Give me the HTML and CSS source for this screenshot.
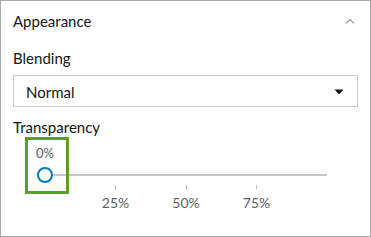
FILE: index.html
```html
<!DOCTYPE html>
<html>
<head>
<meta charset="utf-8">
<link rel="stylesheet" href="styles.css">
</head>
<body>
<div class="panel">
  <div class="header">
    <span class="title">Appearance</span>
    <svg class="chev" width="10" height="6" viewBox="0 0 10 6"><path d="M1 5.5 L5 1.5 L9 5.5" fill="none" stroke="#9a9a9a" stroke-width="1.2"/></svg>
  </div>
  <div class="content">
    <div class="label label-first">Blending</div>
    <div class="select">
      <span>Normal</span>
      <svg width="10" height="6" viewBox="0 0 10 6"><path d="M0.5 0.5 H9.5 L5 5.5 Z" fill="#151515"/></svg>
    </div>
    <div class="label label-second">Transparency</div>
    <div class="slider">
      <div class="track-row">
        <div class="track"></div>
        <div class="handle"></div>
        <div class="value">0%</div>
      </div>
      <div class="scale">
        <div class="mark"></div>
        <div class="mark"><span class="tick"></span><span class="tick-label">25%</span></div>
        <div class="mark"><span class="tick"></span><span class="tick-label">50%</span></div>
        <div class="mark"><span class="tick"></span><span class="tick-label">75%</span></div>
        <div class="mark"></div>
      </div>
    </div>
  </div>
  <div class="highlight"></div>
</div>
</body>
</html>
```
FILE: styles.css
```css
html, body {
  margin: 0;
  padding: 0;
  background: #ffffff;
}
body {
  font-family: "Lato", "Open Sans", sans-serif;
  color: #151515;
}
.panel {
  position: relative;
  box-sizing: border-box;
  width: 371px;
  height: 237px;
  border: 1px solid #a9a9a9;
  background: #ffffff;
}
.header {
  height: 40px;
  display: flex;
  align-items: center;
  justify-content: space-between;
  padding: 0 15px 0 12px;
}
.title {
  font-size: 15px;
  line-height: 20px;
}
.chev {
  display: block;
}
.content {
  padding: 0 12px;
}
.label {
  font-size: 15px;
  line-height: 20px;
}
.label-first {
  margin-top: 7px;
}
.label-second {
  margin-top: 10px;
}
.select {
  margin-top: 7px;
  box-sizing: border-box;
  height: 32px;
  border: 1px solid #cacaca;
  display: flex;
  align-items: center;
  justify-content: space-between;
  padding: 1px 13px 0 12px;
  font-size: 15px;
}
.slider {
  padding-left: 32px;
  padding-top: 4px;
}
.track-row {
  position: relative;
  width: 282px;
  height: 42px;
}
.track {
  position: absolute;
  left: 0;
  right: 0;
  top: 33px;
  height: 2px;
  background: #c6c6c6;
}
.handle {
  position: absolute;
  left: -8px;
  top: 26px;
  box-sizing: border-box;
  width: 16px;
  height: 16px;
  border: 2px solid #007ac2;
  border-radius: 50%;
  background: #ffffff;
}
.value {
  position: absolute;
  left: -20px;
  width: 40px;
  top: 4px;
  text-align: center;
  font-size: 13px;
  line-height: 16px;
  color: #5f5f5f;
}
.scale {
  width: 282px;
  display: flex;
  justify-content: space-between;
}
.mark {
  width: 0;
  display: flex;
  flex-direction: column;
  align-items: center;
}
.tick {
  display: block;
  width: 1px;
  height: 4px;
  background: #b5b5b5;
  margin-top: 2px;
}
.tick-label {
  display: block;
  margin-top: 6px;
  font-size: 14px;
  line-height: 16px;
  color: #5f5f5f;
  white-space: nowrap;
}
.highlight {
  position: absolute;
  left: 24px;
  top: 136px;
  width: 38px;
  height: 51px;
  border: 3px solid #5a9e2b;
}
```
